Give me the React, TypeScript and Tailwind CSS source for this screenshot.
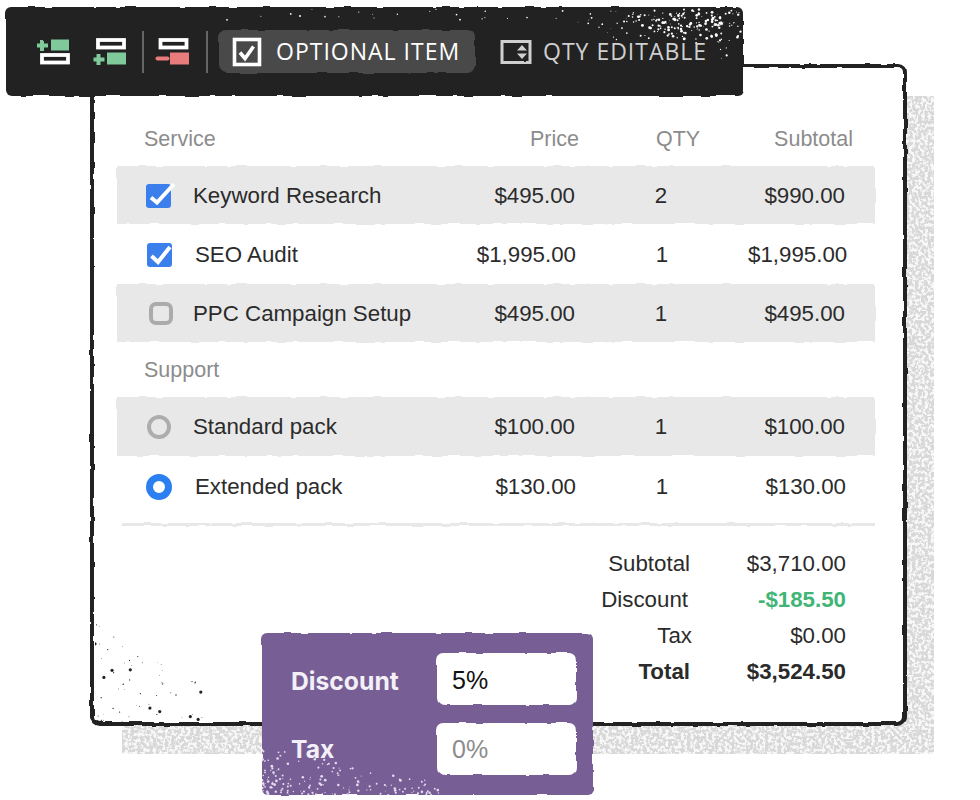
import type { ReactNode } from 'react'

function makeRandom(seed: number) {
  let value = seed
  return () => {
    value = (value * 16807) % 2147483647
    return (value - 1) / 2147483646
  }
}

type Dot = { x: number; y: number; r: number }

function makeToolbarDots() {
  const random = makeRandom(11)
  const dots: Dot[] = []
  // main cluster in the top right corner
  for (let i = 0; i < 170; i++) {
    const x = 685 + (random() + random() + random() - 1.5) * 70
    const y = 16 + (random() + random() + random() - 1.5) * 16
    if (x < 735 && y > 2) dots.push({ x, y, r: 0.4 + random() * 1.1 })
  }
  for (let i = 0; i < 40; i++) {
    dots.push({ x: 560 + random() * 175, y: 3 + random() * 24, r: 0.3 + random() * 0.7 })
  }
  for (let i = 0; i < 22; i++) {
    dots.push({ x: 220 + random() * 340, y: 2 + random() * 12, r: 0.4 + random() * 0.6 })
  }
  for (let i = 0; i < 10; i++) {
    dots.push({ x: 700 + random() * 35, y: 28 + random() * 24, r: 0.4 + random() * 1 })
  }
  return dots
}

function makeCornerDots() {
  const random = makeRandom(29)
  const dots: Dot[] = []
  for (let i = 0; i < 56; i++) {
    const x = Math.pow(random(), 1.3) * 112
    const y = 100 - Math.pow(random(), 1.2) * (100 - x * 0.6)
    dots.push({ x, y, r: random() > 0.85 ? 1.6 : 0.3 + random() * 0.4 })
  }
  return dots
}

function makePanelDots() {
  const random = makeRandom(53)
  const dots: Dot[] = []
  for (let i = 0; i < 170; i++) {
    const x = Math.pow(random(), 1.9) * 180
    const y = 162 - Math.pow(random(), 1.6) * (48 - x * 0.2)
    dots.push({ x, y, r: 0.4 + random() * 1 })
  }
  return dots
}

const toolbarDots = makeToolbarDots()
const cornerDots = makeCornerDots()
const panelDots = makePanelDots()

function Filters() {
  return (
    <svg className="absolute h-0 w-0" aria-hidden="true">
      <defs>
        <filter id="rough" x="-5%" y="-100%" width="110%" height="300%">
          <feTurbulence type="fractalNoise" baseFrequency="0.06" numOctaves="2" seed="4" result="noise" />
          <feDisplacementMap in="SourceGraphic" in2="noise" scale="3.5" xChannelSelector="R" yChannelSelector="G" />
        </filter>
        <filter id="rough-small" x="-10%" y="-10%" width="120%" height="120%">
          <feTurbulence type="fractalNoise" baseFrequency="0.1" numOctaves="2" seed="8" result="noise" />
          <feDisplacementMap in="SourceGraphic" in2="noise" scale="1.6" xChannelSelector="R" yChannelSelector="G" />
        </filter>
        <filter id="grain" x="0" y="0" width="100%" height="100%">
          <feTurbulence type="fractalNoise" baseFrequency="0.32" numOctaves="2" seed="3" result="noise" />
          <feColorMatrix
            in="noise"
            type="matrix"
            values="0 0 0 0 0.94  0 0 0 0 0.94  0 0 0 0 0.94  7 0 0 0 -3.2"
            result="holes"
          />
          <feComposite in="holes" in2="SourceGraphic" operator="over" />
        </filter>
      </defs>
    </svg>
  )
}

function RoughBg({ className }: { className: string }) {
  return <div className={`absolute inset-0 [filter:url(#rough)] ${className}`} />
}

function Dots({ dots, fill, className }: { dots: Dot[]; fill: string; className: string }) {
  return (
    <svg className={`pointer-events-none absolute ${className}`} aria-hidden="true">
      {dots.map((dot, index) => (
        <circle key={index} cx={dot.x} cy={dot.y} r={dot.r} fill={fill} />
      ))}
    </svg>
  )
}

function Bar({ x, y }: { x: number; y: number }) {
  return <rect x={x} y={y} width="26" height="7.500" fill="none" stroke="#fff" strokeWidth="3.8" />
}

function AddAboveIcon() {
  return (
    <svg viewBox="0 0 36 30" className="h-[30px] w-[36px] [filter:url(#rough-small)]">
      <path d="M6 3v11M1 8.500h11" stroke="#7fc99a" strokeWidth="4" fill="none" />
      <rect x="15" y="2.500" width="18" height="11" fill="#7fc99a" />
      <Bar x={6} y={18} />
    </svg>
  )
}

function AddBelowIcon() {
  return (
    <svg viewBox="0 0 36 30" className="h-[30px] w-[36px] [filter:url(#rough-small)]">
      <Bar x={6} y={3} />
      <path d="M6.500 17v11M1.500 22.500h11" stroke="#7fc99a" strokeWidth="4" fill="none" />
      <rect x="15" y="15.500" width="19" height="12" fill="#7fc99a" />
    </svg>
  )
}

function RemoveIcon() {
  return (
    <svg viewBox="0 0 36 30" className="h-[30px] w-[36px] [filter:url(#rough-small)]">
      <Bar x={5.5} y={3} />
      <path d="M2.500 21.500h10" stroke="#e87c7c" strokeWidth="4" strokeLinecap="round" fill="none" />
      <rect x="15" y="15.500" width="19" height="12" fill="#e87c7c" />
    </svg>
  )
}

function ToolbarCheckIcon() {
  return (
    <svg viewBox="0 0 30 30" className="h-[30px] w-[30px] [filter:url(#rough-small)]">
      <rect x="2.500" y="2.500" width="25" height="25" fill="none" stroke="#fff" strokeWidth="3.6" />
      <path d="M8 15.500l5 6 8.500-12" fill="none" stroke="#fff" strokeWidth="3.6" />
    </svg>
  )
}

function QtyIcon() {
  return (
    <svg viewBox="0 0 32 26" className="h-[26px] w-[32px] [filter:url(#rough-small)]">
      <rect x="2" y="2.500" width="28" height="21" fill="none" stroke="#cfcfcf" strokeWidth="3" />
      <path d="M17 11.500l5-5.500 5 5.500zM17 14.500h10l-5 5.500z" fill="#cfcfcf" />
    </svg>
  )
}

function Checkbox({ white }: { white?: boolean }) {
  return (
    <svg viewBox="0 0 30 28" className="h-[28px] w-[30px] [filter:url(#rough-small)]">
      <rect x="1" y="2" width="25" height="24" rx="3" fill="#3b7fed" />
      <path
        d={white ? 'M6 15.500l6 5L29 2' : 'M5.500 15l6.500 6L24 6'}
        fill="none"
        stroke="#fff"
        strokeWidth="4"
      />
    </svg>
  )
}

function EmptyCheckbox() {
  return (
    <div className="ml-[4px] h-[23px] w-[24px] rounded-[7px] border-[4px] border-[#ababab] [filter:url(#rough-small)]" />
  )
}

function Radio({ checked }: { checked?: boolean }) {
  return checked ? (
    <div className="h-[26px] w-[26px] rounded-full border-[7px] border-[#2b7ff0] bg-white" />
  ) : (
    <div className="ml-[2px] h-[24px] w-[24px] rounded-full border-[4px] border-[#adadad]" />
  )
}

type RowProps = {
  icon: ReactNode
  name: string
  price: string
  qty: string
  subtotal: string
  shaded?: boolean
  height?: string
}

function Row({ icon, name, price, qty, subtotal, shaded, height = 'h-[58px]' }: RowProps) {
  return (
    <div className={`relative ${height}`}>
      {shaded && <RoughBg className="bg-[#e8e8e8]" />}
      <div
        className={`relative grid h-full grid-cols-[76px_265px_117px_172px_98px] items-center pt-[1px] ${shaded ? '' : 'pl-[1px]'}`}
      >
        <div className="pl-[28px]">{icon}</div>
        <div className={shaded ? '' : 'pl-[1px]'}>{name}</div>
        <div className="text-right">{price}</div>
        <div className="text-center">{qty}</div>
        <div className="text-right">{subtotal}</div>
      </div>
    </div>
  )
}

function TotalRow({ label, value, className, labelClass }: { label: string; value: string; className?: string; labelClass: string }) {
  return (
    <div className={`flex h-[36px] items-center justify-end pr-[29px] ${className ?? ''}`}>
      <div className={labelClass}>{label}</div>
      <div className="w-[156px] text-right">{value}</div>
    </div>
  )
}

function App() {
  return (
    <div className="relative h-[800px] w-[980px] overflow-hidden bg-white font-['Liberation_Sans',Arial,sans-serif] text-[22.3px] text-[#2b2b2b]">
      <Filters />

      {/* grainy drop shadow behind the sheet */}
      <svg className="absolute left-[122px] top-[96px] h-[658px] w-[812px]" aria-hidden="true">
        <rect width="812" height="658" fill="#d8d8d8" filter="url(#grain)" />
      </svg>

      <div className="relative ml-[90px] mt-[64px] h-[662px] w-[817px] pl-[27px] pt-[59px]">
        <RoughBg className="rounded-[9px] border-[4px] border-[#222] bg-white" />
        <Dots dots={cornerDots} fill="#222" className="left-[5px] top-[558px] h-[100px] w-[116px]" />

        <div className="relative w-[758px]">
          <div className="grid h-[30px] grid-cols-[27px_314px_121px_199px_75px] items-center text-[21.5px] text-[#8c8c8c]">
            <div />
            <div>Service</div>
            <div className="text-right">Price</div>
            <div className="pl-[77px]">QTY</div>
            <div className="-ml-[24px] text-right">Subtotal</div>
          </div>

          <div className="mt-[13px] flex flex-col gap-[1px]">
            <Row icon={<Checkbox white />} name="Keyword Research" price="$495.00" qty="2" subtotal="$990.00" shaded />
            <Row icon={<Checkbox />} name="SEO Audit" price="$1,995.00" qty="1" subtotal="$1,995.00" />
            <Row icon={<EmptyCheckbox />} name="PPC Campaign Setup" price="$495.00" qty="1" subtotal="$495.00" shaded />
          </div>

          <div className="mt-[13px] flex h-[30px] items-center pl-[27px] text-[21.5px] text-[#8c8c8c]">Support</div>

          <div className="mt-[12px] flex flex-col gap-[1px]">
            <Row
              icon={<Radio />}
              name="Standard pack"
              price="$100.00"
              qty="1"
              subtotal="$100.00"
              shaded
              height="h-[59px]"
            />
            <Row icon={<Radio checked />} name="Extended pack" price="$130.00" qty="1" subtotal="$130.00" />
          </div>

          <div className="relative ml-[5px] mt-[8px] h-[3px] w-[753px]">
            <RoughBg className="bg-[#e8e8e8]" />
          </div>

          <div className="mt-[20px]">
            <TotalRow label="Subtotal" value="$3,710.00" labelClass="" />
            <TotalRow
              label="Discount"
              value="-$185.50"
              labelClass="pr-[2px] font-normal text-[#2b2b2b]"
              className="font-bold text-[#41b576]"
            />
            <TotalRow label="Tax" value="$0.00" labelClass="-mr-[2px]" />
            <TotalRow label="Total" value="$3,524.50" labelClass="" className="font-bold" />
          </div>
        </div>
      </div>

      {/* floating toolbar */}
      <div className="absolute left-[6px] top-[7px] h-[89px] w-[737px]">
        <RoughBg className="rounded-[6px] bg-[#222222]" />
        <Dots dots={toolbarDots} fill="#fff" className="left-0 top-0 h-[89px] w-[737px]" />
        <div className="relative flex h-full items-center pl-[30px] font-['Open_Sans',sans-serif] text-[23px] font-normal tracking-[1px]">
          <AddAboveIcon />
          <div className="ml-[20px]">
            <AddBelowIcon />
          </div>
          <div className="ml-[14px] h-[42px] w-[2px] bg-[#666]" />
          <div className="ml-[11px]">
            <RemoveIcon />
          </div>
          <div className="ml-[15px] h-[42px] w-[2px] bg-[#666]" />
          <div className="relative ml-[11px] flex h-[43px] w-[256px] items-center gap-[14px] pl-[13px] text-white">
            <RoughBg className="rounded-[8px] bg-[#4a4a4a]" />
            <div className="relative">
              <ToolbarCheckIcon />
            </div>
            <span className="relative whitespace-nowrap">OPTIONAL ITEM</span>
          </div>
          <div className="ml-[25px] flex items-center gap-[11px] text-[#cfcfcf]">
            <QtyIcon />
            <span className="whitespace-nowrap">QTY EDITABLE</span>
          </div>
        </div>
      </div>

      {/* discount / tax popover */}
      <div className="absolute left-[262px] top-[633px] h-[162px] w-[331px]">
        <RoughBg className="rounded-[6px] bg-[#775f96]" />
        <Dots dots={panelDots} fill="#e6ddf0" className="left-0 top-0 h-[162px] w-[331px]" />
        <div className="relative grid grid-cols-[146px_139px] items-center gap-y-[18px] pl-[29px] pt-[20px] font-['Inter',sans-serif] text-[24.7px] font-bold text-[#f4f0f8]">
          <div className="pt-[5px]">Discount</div>
          <div className="relative flex h-[52px] items-center pl-[15px] pt-[3px] font-['Liberation_Sans',sans-serif] text-[25px] font-normal text-[#111]">
            <RoughBg className="rounded-[7px] bg-white" />
            <span className="relative">5%</span>
          </div>
          <div className="pt-[2px]">Tax</div>
          <div className="relative flex h-[52px] items-center pl-[15px] pt-[2px] font-['Liberation_Sans',sans-serif] text-[25px] font-normal text-[#8c8c8c]">
            <RoughBg className="rounded-[7px] bg-white" />
            <span className="relative">0%</span>
          </div>
        </div>
      </div>
    </div>
  )
}

export default App
